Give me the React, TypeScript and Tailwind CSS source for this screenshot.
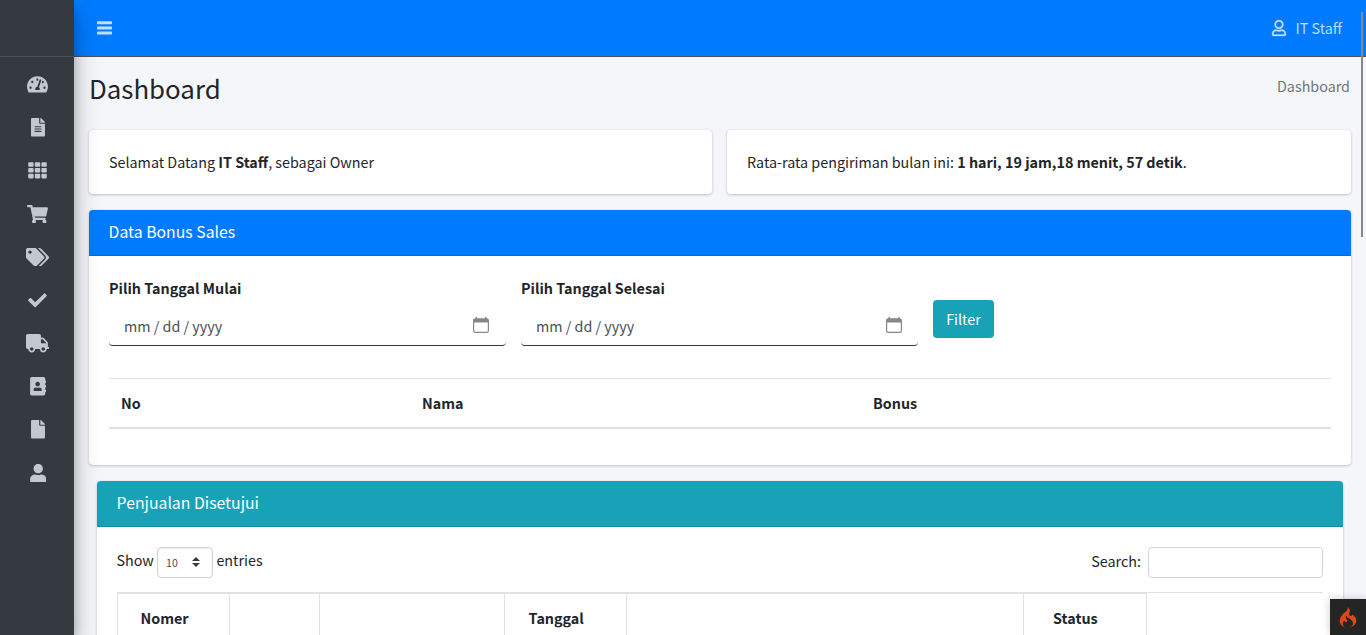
import type { ReactNode } from "react";
import {
  FaAddressBook,
  FaCheck,
  FaFile,
  FaFileAlt,
  FaRegUser,
  FaShoppingCart,
  FaTachometerAlt,
  FaTags,
  FaTh,
  FaTruck,
  FaUser,
} from "react-icons/fa";
import { SiCodeigniter } from "react-icons/si";

const menu = [
  { Icon: FaTachometerAlt, width: "w-[21px]" },
  { Icon: FaFileAlt, width: "w-[14px]" },
  { Icon: FaTh, width: "w-[19px]" },
  { Icon: FaShoppingCart, width: "w-[21px]" },
  { Icon: FaTags, width: "w-[23px]" },
  { Icon: FaCheck, width: "w-[19px]" },
  { Icon: FaTruck, width: "w-[23px]" },
  { Icon: FaAddressBook, width: "w-[16.5px]" },
  { Icon: FaFile, width: "w-[14px]" },
  { Icon: FaUser, width: "w-[16.5px]" },
];

const columns = [
  { label: "Nomer", style: "w-[112px] pl-[22.5px]" },
  { label: "", style: "w-[90px]" },
  { label: "", style: "w-[185px]" },
  { label: "Tanggal", style: "w-[122px] pl-[23.5px]" },
  { label: "", style: "w-[397px]" },
  { label: "Status", style: "w-[123px] pl-[29px]" },
];

const cardShadow = "shadow-[0_0_1px_rgba(0,0,0,0.125),0_1px_3px_rgba(0,0,0,0.2)]";

function Sidebar() {
  return (
    <aside className="relative z-20 flex w-[74px] shrink-0 flex-col bg-[#343a40] shadow-[0_14px_28px_rgba(0,0,0,0.25),0_10px_10px_rgba(0,0,0,0.22)]">
      <div className="h-[57px] shrink-0 border-b border-[#4b545c]" />
      <nav className="flex flex-col pt-[5.7px]">
        {menu.map(({ Icon, width }, i) => (
          <a key={i} className="flex h-[43.2px] items-center justify-center pl-[1.5px] text-[#c2c7d0]">
            <Icon className={`h-[18.6px] shrink-0 ${width}`} />
          </a>
        ))}
      </nav>
    </aside>
  );
}

function Card({ title, color, className, children }: { title: string; color: string; className: string; children: ReactNode }) {
  return (
    <section className={`rounded bg-white ${cardShadow} ${className}`}>
      <h3 className={`h-[46px] rounded-t border-b border-black/[0.125] pl-[19.6px] text-[15.8px] leading-[43px] text-white ${color}`}>
        {title}
      </h3>
      {children}
    </section>
  );
}

function CalendarIcon() {
  return (
    <svg className="h-4 w-4" viewBox="0 0 16 16" fill="none">
      <path d="M2 1.5h12a1.5 1.5 0 0 1 1.5 1.5v2.5H.5V3A1.5 1.5 0 0 1 2 1.5Z" fill="#85878c" />
      <path d="M2.5 0H4v2H2.5zM12 0h1.5v2H12z" fill="#85878c" />
      <rect x=".6" y="2" width="14.8" height="13.4" rx="1.6" stroke="#85878c" strokeWidth="1.2" />
    </svg>
  );
}

function DateField({ label, iconInset }: { label: string; iconInset: string }) {
  return (
    <div className="w-[397px]">
      <div className="h-8 font-bold leading-6">{label}</div>
      <div className={`flex h-[38px] items-center justify-between rounded border-b border-[#343a40] pl-[15px] text-[#495057] ${iconInset}`}>
        <span className="-mt-px">mm / dd / yyyy</span>
        <span className="-mt-1">
          <CalendarIcon />
        </span>
      </div>
    </div>
  );
}

export default function App() {
  return (
    <div className="relative flex h-[635px] w-[1366px] overflow-hidden bg-[#f4f6f9] font-['Noto_Sans_CJK_JP','Noto_Sans_CJK_SC',sans-serif] text-[14.33px] leading-6 text-[#212529]">
      <Sidebar />
      <div className="flex min-w-0 flex-1 flex-col">
        <header className="flex h-[57px] shrink-0 items-center justify-between border-b border-[#4b545c] bg-[#007bff] pl-[23px] pr-6 text-white/75">
          <svg className="h-[14px] w-[15px]" viewBox="0 0 15 14" fill="currentColor">
            <rect y=".3" width="15" height="3" rx=".7" />
            <rect y="5.4" width="15" height="3" rx=".7" />
            <rect y="10.5" width="15" height="3" rx=".7" />
          </svg>
          <div className="flex items-center gap-[9.5px]">
            <FaRegUser className="h-4 w-[14px] overflow-visible" strokeWidth={8} />
            <span>IT Staff</span>
          </div>
        </header>

        <main className="flex flex-col pl-[15px] pr-[15px]">
          <div className="flex h-[73px] justify-between pt-[13px]">
            <h1 className="text-[25.85px] leading-[35px]">Dashboard</h1>
            <span className="pr-px pt-1 text-[#6c757d]">Dashboard</span>
          </div>

          <div className="flex gap-[15px]">
            <div className={`h-16 w-[623px] rounded bg-white pl-5 pt-5 ${cardShadow}`}>
              Selamat Datang <b>IT Staff</b>, sebagai Owner
            </div>
            <div className={`h-16 w-[624px] rounded bg-white pl-5 pt-5 ${cardShadow}`}>
              Rata-rata pengiriman bulan ini: <b>1 hari, 19 jam,18 menit, 57 detik</b>.
            </div>
          </div>

          <Card title="Data Bonus Sales" color="bg-[#007bff]" className="mt-4 h-[255px]">
            <div className="px-5 pt-5">
              <div className="flex gap-[15px]">
                <DateField label="Pilih Tanggal Mulai" iconInset="pr-[17px]" />
                <DateField label="Pilih Tanggal Selesai" iconInset="pr-4" />
                <button className="mt-6 h-[38px] w-[61px] rounded bg-[#17a2b8] text-white">Filter</button>
              </div>
              <div className="mt-8 flex h-[51px] border-t border-b-2 border-t-[#dee2e6] border-b-[#dee2e6] pl-3 pt-3 font-bold">
                <span className="w-[301px]">No</span>
                <span className="w-[451px]">Nama</span>
                <span>Bonus</span>
              </div>
            </div>
          </Card>

          <Card title="Penjualan Disetujui" color="bg-[#17a2b8]" className="mx-2 mt-4 h-[300px]">
            <div className="px-5 pt-5">
              <div className="flex justify-between">
                <div className="-ml-[0.5px] flex">
                  <span className="w-[40.5px] pt-px">Show</span>
                  <div className="mr-[3.4px] flex h-[31px] w-[56px] items-center justify-between rounded border border-[#ced4da] pl-[8px] pr-[12px] text-[10.6px] text-[#495057] shadow-[inset_0_1px_2px_rgba(0,0,0,0.075)]">
                    <span className="pt-px">10</span>
                    <svg className="-mt-[2px] h-[10px] w-2" viewBox="0 0 4 5">
                      <path fill="#343a40" d="M2 0L0 2h4zm0 5L0 3h4z" />
                    </svg>
                  </div>
                  <span className="pt-px">entries</span>
                </div>
                <div className="flex gap-[7px]">
                  <span className="pt-[2px]">Search:</span>
                  <div className="h-[31px] w-[175px] rounded border border-[#ced4da]" />
                </div>
              </div>
              <div className="mt-[14px] flex border-l border-t border-[#dee2e6]">
                {columns.map((c, i) => (
                  <div key={i} className={`h-[60px] shrink-0 border-r border-t border-[#dee2e6] pt-3 font-bold ${c.style}`}>
                    {c.label}
                  </div>
                ))}
              </div>
            </div>
          </Card>
        </main>
      </div>

      <div className="absolute left-[1361px] top-3 z-30 h-[225px] w-[2px] bg-[#888888]" />
      <div className="absolute bottom-0 right-0 z-30 flex h-9 w-9 items-center justify-center bg-[#252525] shadow-[0_0_8px_rgba(0,0,0,0.2)]">
        <SiCodeigniter className="mr-px h-5 w-5 text-[#dd4814]" />
      </div>
    </div>
  );
}
